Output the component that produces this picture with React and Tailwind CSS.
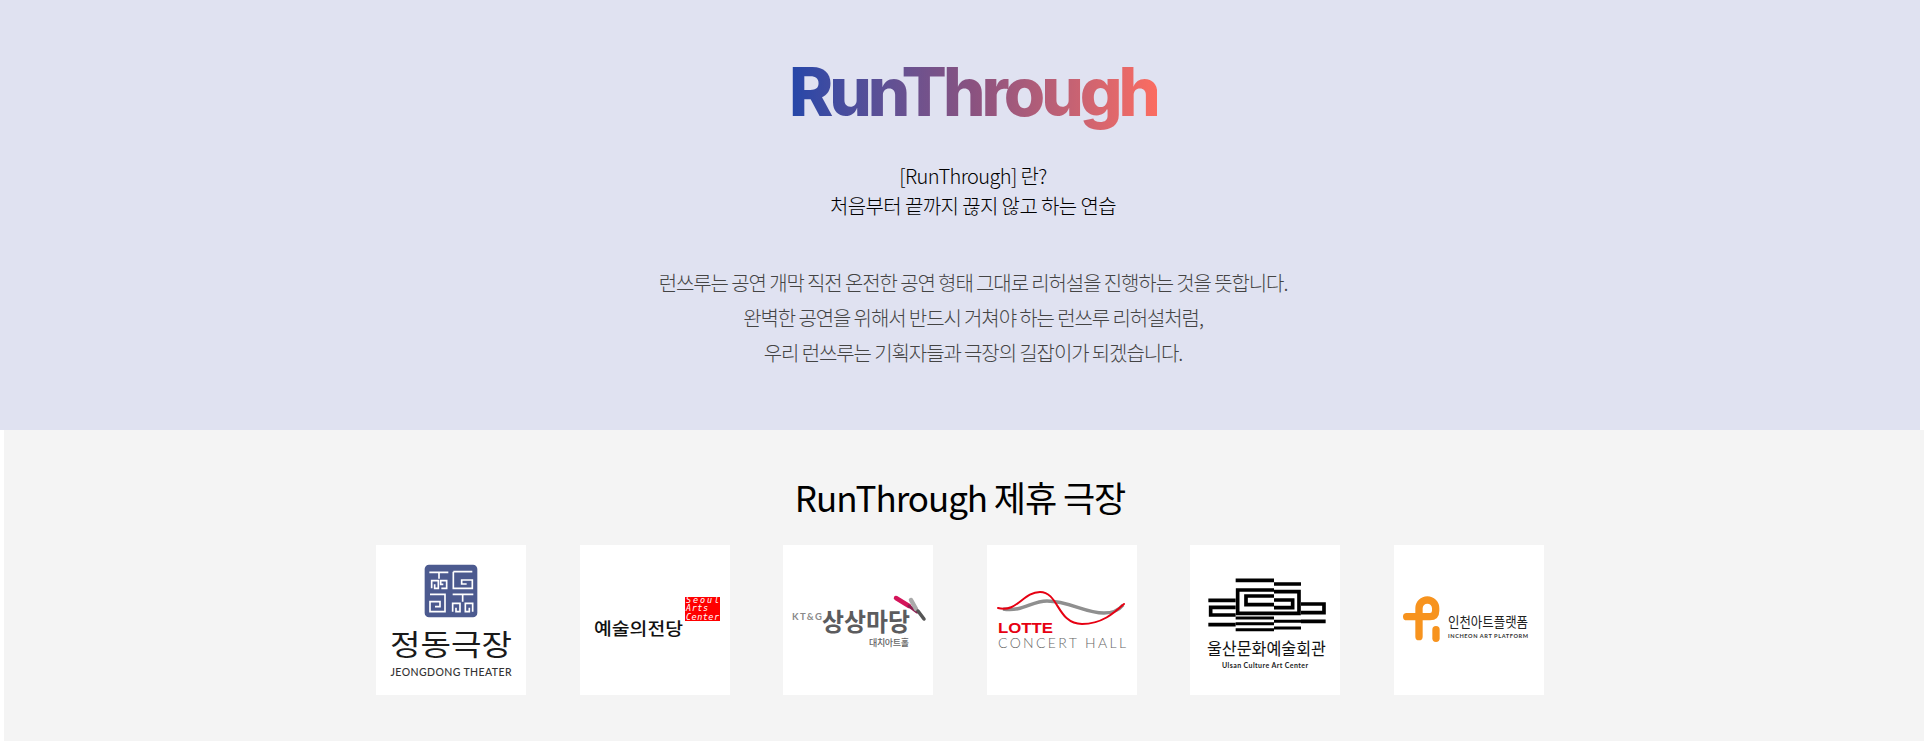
import React from 'react'

const kr = "font-['Noto_Sans_CJK_KR','Noto_Sans',sans-serif]"

function Card({ children }) {
  return <div className="h-[150px] w-[150px] bg-white">{children}</div>
}

function JeongdongLogo() {
  return (
    <svg viewBox="0 0 150 150" className="h-full w-full">
      <g transform="translate(44 15) scale(0.3333)">
        <rect x="14" y="14" width="158" height="158" rx="13" fill="#4c5a8f" />
        <g fill="none" stroke="#fff" strokeWidth="5">
          <path d="M28 37H85M57 37V56M35 85V62H55V85H44V73M64 85H80V62H62V73H70" />
          <path d="M100 35H157M100 35V85H157V60H125V72H140" />
          <path d="M30 103H75V155H30V125H60V140H45" />
          <path d="M98 103H160M128 103V125M98 155V130H120V155H108V143M158 155V130H136V155H148V143" />
        </g>
      </g>
      <text x="75" y="111" textAnchor="middle" fontSize="29" fontWeight="400" textLength="122" lengthAdjust="spacingAndGlyphs" fontFamily="'Noto Sans CJK KR', sans-serif" fill="#1a1a1a">정동극장</text>
      <text x="75" y="131" textAnchor="middle" fontSize="10.5" fontWeight="500" textLength="121" fontFamily="'Lato', sans-serif" fill="#333">JEONGDONG THEATER</text>
    </svg>
  )
}

function SacLogo() {
  return (
    <svg viewBox="0 0 150 150" className="h-full w-full">
      <rect x="105" y="52" width="35" height="24" fill="#f00" />
      <g fontFamily="'DejaVu Sans Mono', monospace" fontSize="8.5" fill="#fff" fontStyle="italic">
        <text x="106" y="58" textLength="33">Seoul</text>
        <text x="106" y="66" textLength="22">Arts</text>
        <text x="106" y="75" textLength="33">Center</text>
      </g>
      <text x="14" y="90" fontSize="17.5" fontWeight="500" textLength="89" lengthAdjust="spacingAndGlyphs" fontFamily="'Noto Sans CJK KR', sans-serif" fill="#111">예술의전당</text>
    </svg>
  )
}

function SangsangLogo() {
  return (
    <svg viewBox="0 0 150 150" className="h-full w-full">
      <text x="9" y="75" fontSize="9.5" fontWeight="700" textLength="30" fontFamily="'Lato', sans-serif" fill="#8a8a8a">KT&amp;G</text>
      <text x="39" y="86" fontSize="25" fontWeight="700" textLength="88" lengthAdjust="spacingAndGlyphs" fontFamily="'Noto Sans CJK KR', sans-serif" fill="#5c5c5e">상상마당</text>
      <text x="86" y="101" fontSize="9" fontWeight="500" textLength="40" fontFamily="'Noto Sans CJK KR', sans-serif" fill="#666">대치아트홀</text>
      <path d="M113 53L126 61" stroke="#d4145a" strokeWidth="4.5" strokeLinecap="round" />
      <path d="M126 61L134 67" stroke="#8c1d4f" strokeWidth="3" strokeLinecap="round" />
      <path d="M128 55L133 64" stroke="#aaa" strokeWidth="4.5" strokeLinecap="round" />
      <path d="M135 66L141 74" stroke="#555" strokeWidth="3.5" strokeLinecap="round" />
    </svg>
  )
}

function LotteLogo() {
  return (
    <svg viewBox="0 0 150 150" className="h-full w-full">
      <path d="M16 64C36 67 44 56 60 56C82 56 98 68 117 68C126 68 132 65 136 60" fill="none" stroke="#8f8f8f" strokeWidth="3.5" />
      <path d="M11 63C30 68 36 47 53 47C72 47 70 79 95 79C115 79 127 68 137 59" fill="none" stroke="#e60012" strokeWidth="2" strokeLinecap="round" />
      <text x="11" y="88" fontSize="14" fontWeight="700" textLength="55" lengthAdjust="spacingAndGlyphs" fontFamily="'Liberation Sans', sans-serif" fill="#e60012">LOTTE</text>
      <text x="11" y="103" fontSize="14" textLength="128" fontFamily="'Lato', sans-serif" fontWeight="300" fill="#666">CONCERT HALL</text>
    </svg>
  )
}

function UlsanLogo() {
  return (
    <svg viewBox="0 0 150 150" className="h-full w-full">
      <g transform="translate(10 25) scale(0.3333)" fill="none" stroke="#000" strokeWidth="11">
        <path d="M107 31H222M222 42H303M25 91H107M25 164H107M303 154H377" />
        <path d="M107 112H32V135H107" />
        <path d="M222 60H113V130H222M222 65H297V130H222" />
        <path d="M222 78H138V104H222M222 90H278V113H222" />
        <path d="M303 102H372V128H303" />
        <path d="M107 144H222M107 161H222M107 179H222M222 154H303M222 174H303" strokeWidth="9" />
      </g>
      <text x="76.5" y="110" textAnchor="middle" fontSize="17" fontWeight="400" textLength="119" lengthAdjust="spacingAndGlyphs" fontFamily="'Noto Sans CJK KR', sans-serif" fill="#111">울산문화예술회관</text>
      <text x="75" y="123" textAnchor="middle" fontSize="7" fontWeight="700" textLength="86" fontFamily="'Lato', sans-serif" fill="#222">Ulsan Culture Art Center</text>
    </svg>
  )
}

function IncheonLogo() {
  return (
    <svg viewBox="0 0 150 150" className="h-full w-full">
      <g transform="translate(6 45) scale(0.3333)" fill="none" stroke="#f7931e" strokeWidth="22" strokeLinecap="round">
        <path d="M57 140V55A25 25 0 0 1 107 55V62Q107 80 90 80H20" />
        <path d="M108 119V145" />
      </g>
      <text x="54" y="82" fontSize="14" textLength="80" lengthAdjust="spacingAndGlyphs" fontFamily="'Noto Sans CJK KR', sans-serif" fill="#222">인천아트플랫폼</text>
      <text x="54" y="93" fontSize="5.6" fontWeight="700" textLength="80" fontFamily="'Lato', sans-serif" fill="#333">INCHEON ART PLATFORM</text>
    </svg>
  )
}

export default function App() {
  return (
    <div className={`w-[1924px] overflow-hidden bg-white ${kr}`}>
      <section className="flex h-[430px] w-[1920px] flex-col items-center bg-[#e0e2f1] pl-[26px]">
        <h1 className="mt-[47px] bg-gradient-to-r from-[#2346a9] via-[#8a5280] to-[#fb6c60] bg-clip-text pb-[10px] font-['Inter',sans-serif] text-[67px] leading-[90px] font-extrabold tracking-[-0.06em] text-transparent">
          RunThrough
        </h1>
        <div className="mt-[14px] text-center text-[20px] leading-[30px] font-extralight tracking-[-0.03em] text-black">
          <p>[RunThrough] 란?</p>
          <p>처음부터 끝까지 끊지 않고 하는 연습</p>
        </div>
        <div className="mt-[44px] text-center text-[20px] leading-[35px] font-extralight tracking-[-0.055em] text-[#444]">
          <p>런쓰루는 공연 개막 직전 온전한 공연 형태 그대로 리허설을 진행하는 것을 뜻합니다.</p>
          <p>완벽한 공연을 위해서 반드시 거쳐야 하는 런쓰루 리허설처럼,</p>
          <p>우리 런쓰루는 기획자들과 극장의 길잡이가 되겠습니다.</p>
        </div>
      </section>
      <section className="ml-1 flex h-[311px] w-[1920px] flex-col items-center bg-[#f4f4f4] pr-2">
        <h2 className="mt-[40px] text-[35px] leading-[54px] font-normal tracking-[-0.03em] text-black">RunThrough 제휴 극장</h2>
        <div className="mt-[21px] flex w-[1168px] justify-between">
          <Card><JeongdongLogo /></Card>
          <Card><SacLogo /></Card>
          <Card><SangsangLogo /></Card>
          <Card><LotteLogo /></Card>
          <Card><UlsanLogo /></Card>
          <Card><IncheonLogo /></Card>
        </div>
      </section>
    </div>
  )
}
